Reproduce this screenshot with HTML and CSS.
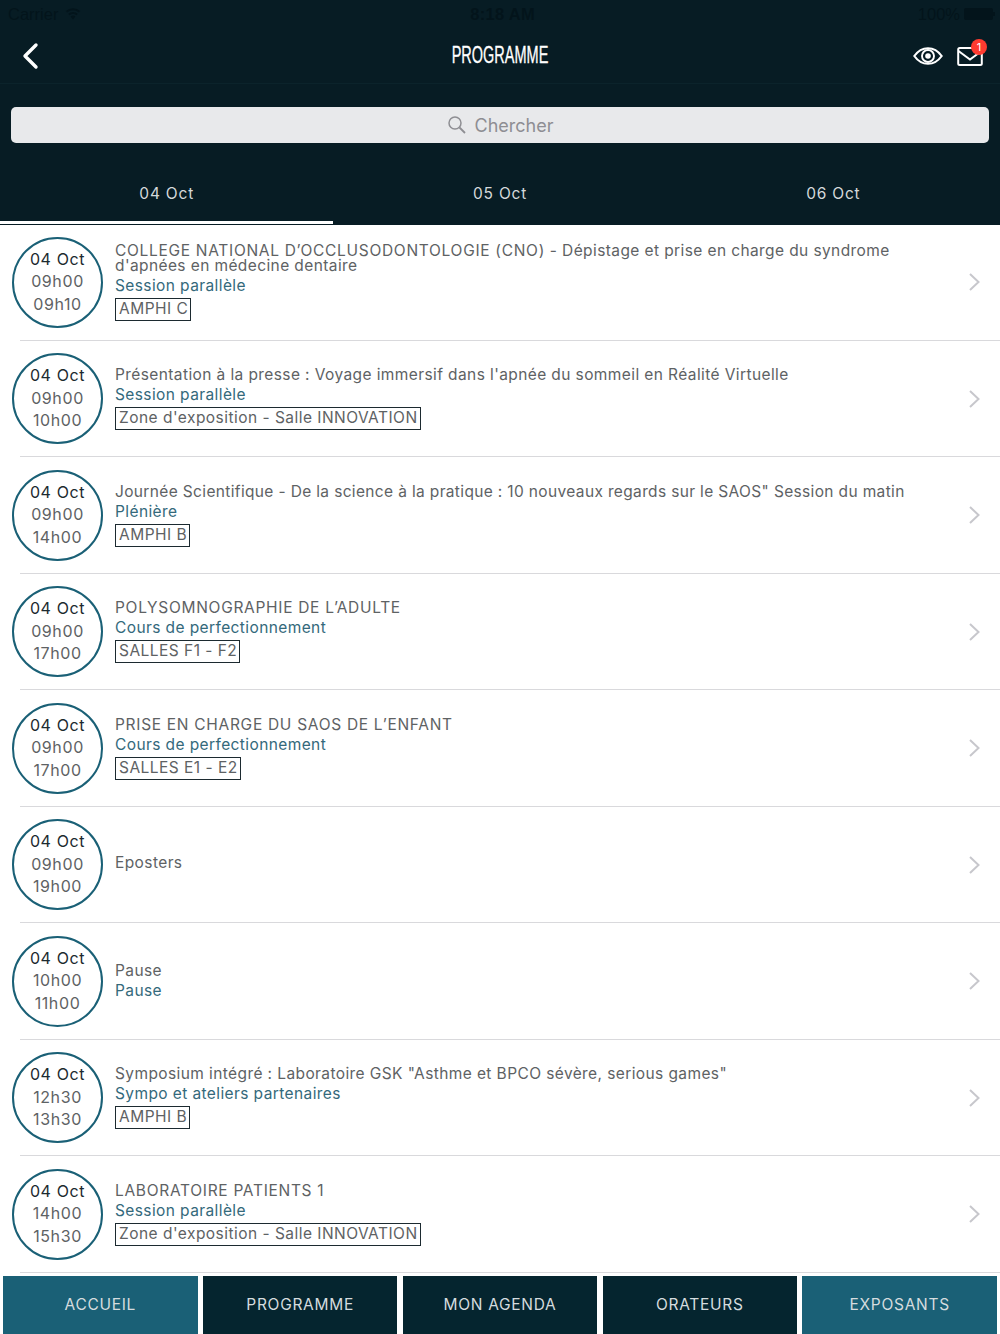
FILE: index.html
```html
<!DOCTYPE html>
<html lang="fr">
<head>
    <meta charset="UTF-8">
    <meta name="viewport" content="width=device-width, initial-scale=1.0">
    <title>Programme</title>
    <link rel="stylesheet" href="styles.css">
</head>
<body>
    <!-- Top header -->
    <header class="header">
        <div class="status-bar">
            <div class="status-left">
                <span>Carrier</span>
                <svg class="wifi" width="16" height="12" viewBox="0 0 16 12"><path d="M8 11.500 5.600 8.600a3.600 3.600 0 0 1 4.800 0zM4.500 7.300 3.200 5.800a7.200 7.200 0 0 1 9.600 0l-1.300 1.500a5.300 5.300 0 0 0-7 0zM2.200 4.600.8 3a10.600 10.600 0 0 1 14.400 0l-1.400 1.600a8.600 8.600 0 0 0-11.600 0z" fill="#03141b"/></svg>
            </div>
            <span class="status-time">8:18 AM</span>
            <div class="status-right">
                <span>100%</span>
                <span class="battery"></span>
            </div>
        </div>
        <div class="nav-bar">
            <svg class="back" width="18" height="28" viewBox="0 0 18 28"><path d="M15 3 4 14l11 11" fill="none" stroke="#fff" stroke-width="3.400" stroke-linecap="round" stroke-linejoin="round"/></svg>
            <h1 class="nav-title">PROGRAMME</h1>
            <div class="nav-icons">
                <svg width="30" height="18" viewBox="0 0 30 18"><path d="M1.300 9C5 3.800 9.500 1.200 15 1.200S25 3.800 28.700 9C25 14.200 20.500 16.800 15 16.800S5 14.200 1.300 9z" fill="none" stroke="#fff" stroke-width="2.100" stroke-linejoin="miter"/><circle cx="15" cy="9" r="6" fill="none" stroke="#fff" stroke-width="1.900"/><circle cx="15" cy="9" r="2.800" fill="#fff"/></svg>
                <div class="mail">
                    <svg width="26" height="22" viewBox="0 0 26 22"><rect x="1.200" y="3" width="23.600" height="17" rx="1.500" fill="none" stroke="#fff" stroke-width="2"/><path d="M1.500 6 13 14.500 24.500 6" fill="none" stroke="#fff" stroke-width="2"/></svg>
                    <span class="badge">1</span>
                </div>
            </div>
        </div>
        <div class="search-wrap">
            <div class="search-box">
                <svg width="20" height="20" viewBox="0 0 20 20"><circle cx="8" cy="8" r="6" fill="none" stroke="#8e8e93" stroke-width="1.500"/><path d="m12.500 12.500 5.500 5.500" stroke="#8e8e93" stroke-width="1.800"/></svg>
                <span>Chercher</span>
            </div>
        </div>
        <div class="tabs">
            <div class="tab active">04 Oct</div>
            <div class="tab">05 Oct</div>
            <div class="tab">06 Oct</div>
        </div>
    </header>

    <!-- Session list -->
    <ul class="sessions">
        <li class="session">
            <div class="clock"><b>04 Oct</b><span>09h00</span><span>09h10</span></div>
            <div class="info">
                <p class="title"><span class="caps">COLLEGE NATIONAL D’OCCLUSODONTOLOGIE (CNO)</span> - Dépistage et prise en charge du syndrome d'apnées en médecine dentaire</p>
                <p class="kind">Session parallèle</p>
                <span class="room">AMPHI C</span>
            </div>
            <svg class="chevron" width="12" height="20" viewBox="0 0 12 20"><path d="m2 2 8.500 8-8.500 8" fill="none" stroke="#c7c7cc" stroke-width="2"/></svg>
        </li>
        <li class="session">
            <div class="clock"><b>04 Oct</b><span>09h00</span><span>10h00</span></div>
            <div class="info">
                <p class="title">Présentation à la presse : Voyage immersif dans l'apnée du sommeil en Réalité Virtuelle</p>
                <p class="kind">Session parallèle</p>
                <span class="room">Zone d'exposition - Salle INNOVATION</span>
            </div>
            <svg class="chevron" width="12" height="20" viewBox="0 0 12 20"><path d="m2 2 8.500 8-8.500 8" fill="none" stroke="#c7c7cc" stroke-width="2"/></svg>
        </li>
        <li class="session">
            <div class="clock"><b>04 Oct</b><span>09h00</span><span>14h00</span></div>
            <div class="info">
                <p class="title tight">Journée Scientifique - De la science à la pratique : 10 nouveaux regards sur le SAOS" Session du matin</p>
                <p class="kind">Plénière</p>
                <span class="room">AMPHI B</span>
            </div>
            <svg class="chevron" width="12" height="20" viewBox="0 0 12 20"><path d="m2 2 8.500 8-8.500 8" fill="none" stroke="#c7c7cc" stroke-width="2"/></svg>
        </li>
        <li class="session">
            <div class="clock"><b>04 Oct</b><span>09h00</span><span>17h00</span></div>
            <div class="info">
                <p class="title caps">POLYSOMNOGRAPHIE DE L’ADULTE</p>
                <p class="kind">Cours de perfectionnement</p>
                <span class="room">SALLES F1 - F2</span>
            </div>
            <svg class="chevron" width="12" height="20" viewBox="0 0 12 20"><path d="m2 2 8.500 8-8.500 8" fill="none" stroke="#c7c7cc" stroke-width="2"/></svg>
        </li>
        <li class="session">
            <div class="clock"><b>04 Oct</b><span>09h00</span><span>17h00</span></div>
            <div class="info">
                <p class="title caps">PRISE EN CHARGE DU SAOS DE L’ENFANT</p>
                <p class="kind">Cours de perfectionnement</p>
                <span class="room">SALLES E1 - E2</span>
            </div>
            <svg class="chevron" width="12" height="20" viewBox="0 0 12 20"><path d="m2 2 8.500 8-8.500 8" fill="none" stroke="#c7c7cc" stroke-width="2"/></svg>
        </li>
        <li class="session">
            <div class="clock"><b>04 Oct</b><span>09h00</span><span>19h00</span></div>
            <div class="info no-kind">
                <p class="title">Eposters</p>
            </div>
            <svg class="chevron" width="12" height="20" viewBox="0 0 12 20"><path d="m2 2 8.500 8-8.500 8" fill="none" stroke="#c7c7cc" stroke-width="2"/></svg>
        </li>
        <li class="session">
            <div class="clock"><b>04 Oct</b><span>10h00</span><span>11h00</span></div>
            <div class="info no-room">
                <p class="title">Pause</p>
                <p class="kind">Pause</p>
            </div>
            <svg class="chevron" width="12" height="20" viewBox="0 0 12 20"><path d="m2 2 8.500 8-8.500 8" fill="none" stroke="#c7c7cc" stroke-width="2"/></svg>
        </li>
        <li class="session">
            <div class="clock"><b>04 Oct</b><span>12h30</span><span>13h30</span></div>
            <div class="info">
                <p class="title">Symposium intégré : Laboratoire GSK "Asthme et BPCO sévère, serious games"</p>
                <p class="kind">Sympo et ateliers partenaires</p>
                <span class="room">AMPHI B</span>
            </div>
            <svg class="chevron" width="12" height="20" viewBox="0 0 12 20"><path d="m2 2 8.500 8-8.500 8" fill="none" stroke="#c7c7cc" stroke-width="2"/></svg>
        </li>
        <li class="session">
            <div class="clock"><b>04 Oct</b><span>14h00</span><span>15h30</span></div>
            <div class="info">
                <p class="title caps">LABORATOIRE PATIENTS 1</p>
                <p class="kind">Session parallèle</p>
                <span class="room">Zone d'exposition - Salle INNOVATION</span>
            </div>
            <svg class="chevron" width="12" height="20" viewBox="0 0 12 20"><path d="m2 2 8.500 8-8.500 8" fill="none" stroke="#c7c7cc" stroke-width="2"/></svg>
        </li>
    </ul>

    <!-- Bottom menu -->
    <nav class="bottom-menu">
        <a class="menu-item teal">ACCUEIL</a>
        <a class="menu-item">PROGRAMME</a>
        <a class="menu-item">MON AGENDA</a>
        <a class="menu-item">ORATEURS</a>
        <a class="menu-item teal">EXPOSANTS</a>
    </nav>
</body>
</html>
```

FILE: styles.css
```css
* {
    margin: 0;
    padding: 0;
    box-sizing: border-box;
}

body {
    font-family: "Inter", "Liberation Sans", sans-serif;
    background-color: #fff;
    width: 1000px;
    height: 1334px;
    overflow: hidden;
    display: flex;
    flex-direction: column;
}

/* Header */
.header {
    height: 225px;
    background-color: #071c24;
    flex-shrink: 0;
}

.status-bar {
    height: 28px;
    display: flex;
    align-items: center;
    justify-content: space-between;
    padding: 0 7px 0 8px;
    font-family: "Liberation Sans", sans-serif;
    font-size: 16.500px;
    color: #03141b;
}

.status-left,
.status-right {
    display: flex;
    align-items: center;
    gap: 7px;
}

.status-right {
    gap: 4px;
}

.status-time {
    font-weight: bold;
    letter-spacing: 0.300px;
    margin-left: 6px;
}

.battery {
    width: 29px;
    height: 12px;
    background-color: #03141b;
    border-radius: 2px;
    display: block;
    position: relative;
}

.battery::after {
    content: "";
    position: absolute;
    left: 29px;
    top: 4px;
    width: 2px;
    height: 4px;
    background-color: #03141b;
}

.nav-bar {
    height: 56px;
    display: flex;
    align-items: center;
    justify-content: space-between;
    padding: 0 17px 0 21px;
    border-bottom: 1px solid #0b232b;
    position: relative;
}

.nav-title {
    font-family: "Liberation Sans", sans-serif;
    font-weight: normal;
    font-size: 23px;
    color: #fff;
    -webkit-text-stroke: 0.300px #fff;
    position: absolute;
    left: 0;
    right: 0;
    text-align: center;
    transform: scaleX(0.630);
}

.nav-icons {
    display: flex;
    align-items: center;
    gap: 14px;
}

.mail {
    position: relative;
    height: 22px;
}

.badge {
    position: absolute;
    top: -6px;
    right: -4px;
    width: 16px;
    height: 16px;
    border-radius: 50%;
    background-color: #ff3b30;
    color: #fff;
    font-size: 11px;
    line-height: 16px;
    text-align: center;
}

.search-wrap {
    padding: 23px 11px 0;
}

.search-box {
    height: 36px;
    background-color: #e8e9eb;
    border-radius: 5px;
    display: flex;
    align-items: center;
    justify-content: center;
    gap: 8px;
    color: #8e8e93;
    font-size: 18px;
}

.tabs {
    display: flex;
    margin-top: 14px;
}

.tab {
    width: 333.330px;
    height: 67px;
    padding-top: 27px;
    text-align: center;
    font-size: 15.500px;
    color: #d5d9db;
    letter-spacing: 0.800px;
}

.tab.active {
    border-bottom: 3px solid #fff;
}

/* Sessions */
.sessions {
    list-style: none;
    flex: 1;
    overflow: hidden;
    margin-top: -1px; /* header's last pixel shows through under the tabs */
}

.session {
    height: 116.500px;
    display: flex;
    align-items: center;
    padding-left: 12px;
    position: relative;
}

.session::after {
    content: "";
    position: absolute;
    left: 20px;
    right: 0;
    bottom: 0;
    height: 1px;
    background-color: #d9d9dc;
}

.clock {
    width: 91px;
    height: 91px;
    border: 2.500px solid #1a6076;
    border-radius: 50%;
    flex-shrink: 0;
    display: flex;
    flex-direction: column;
    align-items: center;
    justify-content: center;
    padding-bottom: 2px;
    font-size: 16px;
    line-height: 22.500px;
    letter-spacing: 0.600px;
    color: #5e6264;
}

.clock b {
    font-weight: normal;
    color: #1c2a30;
}

.info {
    flex: 1;
    margin-left: 12px;
    padding-right: 80px;
    letter-spacing: 0.400px;
}

.info.no-kind {
    padding-bottom: 5px;
}

.info.no-room {
    padding-top: 2px;
}

.title {
    font-size: 15.500px;
    line-height: 15px;
    color: #5e6264;
}

.title.tight {
    letter-spacing: 0.350px;
}

.caps {
    letter-spacing: 0.700px;
}

.kind {
    font-size: 15.500px;
    line-height: 20px;
    margin-top: 3px;
    color: #34697b;
}

.room {
    display: inline-block;
    margin-top: 2px;
    padding: 0 2px 0 3px;
    height: 23px;
    line-height: 20px;
    font-size: 15.500px;
    letter-spacing: 0.470px;
    color: #5e6264;
    border: 1.500px solid #1c2a30;
}

.chevron {
    position: absolute;
    right: 20px;
    top: 48px;
}

/* Bottom menu */
.bottom-menu {
    height: 61px;
    flex-shrink: 0;
    display: flex;
    gap: 5.250px;
    padding: 3px 3px 0;
    background-color: #fff;
}

.menu-item {
    flex: 1;
    background-color: #05252f;
    color: #d5dcdf;
    font-size: 15.500px;
    letter-spacing: 0.700px;
    padding-bottom: 2px;
    display: flex;
    align-items: center;
    justify-content: center;
}

.menu-item.teal {
    background-color: #1a6076;
}
```
